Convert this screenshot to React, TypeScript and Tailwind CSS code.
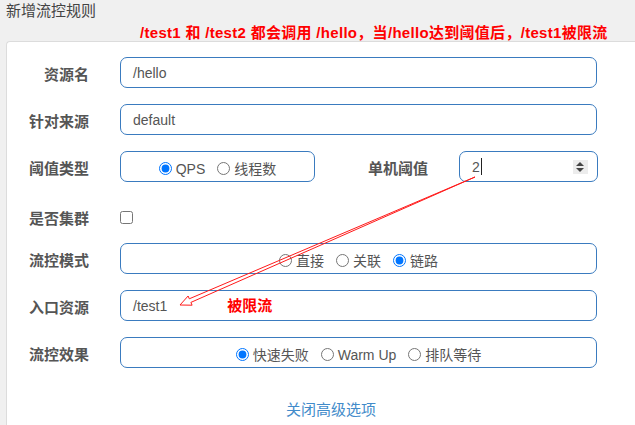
import React from "react";

const box = "h-[31px] rounded-[7px] border border-[#3a7bbf] bg-white";
const label = "shrink-0 pt-[5px] text-right text-[15px] font-bold leading-[20px] text-[#555]";

function Radio({ text, checked }: { text: string; checked?: boolean }) {
  return (
    <label className="flex items-center gap-[4px]">
      <input type="radio" checked={!!checked} readOnly className="m-0 h-[13px] w-[13px]" />
      <span className="pt-[1px]">{text}</span>
    </label>
  );
}

function RadioBox({ items, className }: { items: { t: string; c?: boolean }[]; className: string }) {
  return (
    <div className={`${box} ${className} flex items-center justify-center gap-[12px] pt-[4px] text-[14px] text-[#555]`}>
      {items.map((i) => (
        <Radio key={i.t} text={i.t} checked={i.c} />
      ))}
    </div>
  );
}

function Row({ name, children, className = "" }: { name: string; children: React.ReactNode; className?: string }) {
  return (
    <div className={`flex items-center ${className}`}>
      <div className={`${label} w-[82px]`}>{name}</div>
      <div className="ml-[31px] flex items-center">{children}</div>
    </div>
  );
}

function TextBox({ value, extra }: { value: string; extra?: React.ReactNode }) {
  return (
    <div className={`${box} flex w-[477px] items-center pl-[12px] pt-[2px] text-[14px] text-[#555]`}>
      <span>{value}</span>
      {extra}
    </div>
  );
}

export default function App() {
  return (
    <div className="relative h-[425px] overflow-hidden bg-[#f0f0f0] font-['Liberation_Sans','Noto_Sans_CJK_SC',sans-serif]">
      <div className="h-[23px] pl-[6px] pt-[1px] text-[15px] leading-[20px] text-[#444]">新增流控规则</div>
      <div className="h-[18px] whitespace-nowrap pl-[140px] text-[15px] font-bold leading-[19px] tracking-[0.3px] text-[#ff0000]">
        /test1 和 /test2 都会调用 /hello，当/hello达到阈值后，/test1被限流
      </div>
      <div className="ml-[6px] h-[384px] rounded-tl-[4px] border-l border-t border-[#dcdcdc] bg-white pt-[15px]">
        <div className="flex flex-col">
          <Row name="资源名">
            <TextBox value="/hello" />
          </Row>
          <Row name="针对来源" className="mt-[16px]">
            <TextBox value="default" />
          </Row>
          <div className="mt-[16px] flex items-center">
            <div className={`${label} w-[82px]`}>阈值类型</div>
            <RadioBox className="ml-[31px] w-[195px]" items={[{ t: "QPS", c: true }, { t: "线程数" }]} />
            <div className={`${label} w-[113px]`}>单机阈值</div>
            <div className={`${box} ml-[31px] flex w-[139px] items-center pl-[12px] text-[14px] text-[#555]`}>
              <span className="pt-[2px]">2</span>
              <span className="ml-[1px] h-[17px] w-[1px] bg-[#222]" />
              <div className="ml-[91px] flex h-[14px] w-[15px] flex-col items-center justify-center gap-[2px] bg-[#ececec]">
                <div className="h-0 w-0 border-x-[4px] border-b-[4px] border-x-transparent border-b-[#444]" />
                <div className="h-0 w-0 border-x-[4px] border-t-[4px] border-x-transparent border-t-[#444]" />
              </div>
            </div>
          </div>
          <div className="mt-[28px] flex h-[14px] items-center">
            <div className="w-[82px] shrink-0 pt-[4px] text-right text-[15px] font-bold leading-[20px] text-[#555]">是否集群</div>
            <input type="checkbox" readOnly className="m-0 ml-[31px] h-[13px] w-[13px]" />
          </div>
          <Row name="流控模式" className="mt-[19px]">
            <RadioBox className="w-[477px]" items={[{ t: "直接" }, { t: "关联" }, { t: "链路", c: true }]} />
          </Row>
          <Row name="入口资源" className="mt-[16px]">
            <TextBox
              value="/test1"
              extra={<span className="ml-[60px] text-[15px] font-bold text-[#ff0000]">被限流</span>}
            />
          </Row>
          <Row name="流控效果" className="mt-[16px]">
            <RadioBox className="w-[477px]" items={[{ t: "快速失败", c: true }, { t: "Warm Up" }, { t: "排队等待" }]} />
          </Row>
          <div className="ml-[279px] mt-[33px] text-[15px] leading-[18px] text-[#428bca]">关闭高级选项</div>
        </div>
      </div>
      <svg className="pointer-events-none absolute left-0 top-0" width="635" height="425" viewBox="0 0 635 425">
        <polygon
          points="475,177 190.9,302.4 192.1,305.2 180,305 188.1,296 189.3,298.8"
          fill="none"
          stroke="#ff1a1a"
          strokeWidth="1"
          strokeLinejoin="miter"
        />
      </svg>
    </div>
  );
}
